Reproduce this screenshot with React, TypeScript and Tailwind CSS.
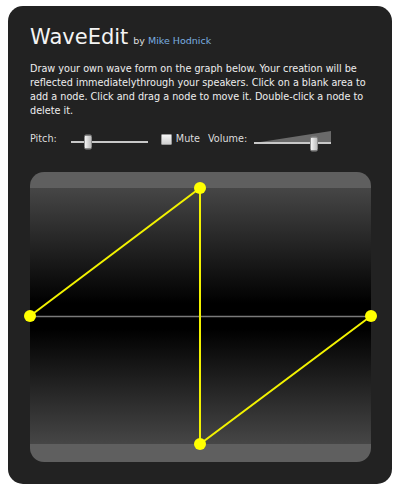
import React from "react";

const font = { fontFamily: '"DejaVu Sans", Verdana, sans-serif' };
const condensed = { fontFamily: '"DejaVu Sans Condensed", "DejaVu Sans", Tahoma, sans-serif' };

function Thumb() {
  return (
    <div className="absolute top-1/2 -translate-y-1/2 w-[8px] h-[15px] rounded-[2px] bg-gradient-to-r from-[#f4f4f4] to-[#bdbdbd] border border-[#8a8a8a]" />
  );
}

function WaveGraph() {
  const nodes = [
    [0, 144],
    [170, 16],
    [170, 272],
    [341, 144],
  ];
  return (
    <div className="relative w-[341px] h-[290px] rounded-[14px] overflow-visible">
      <div className="flex flex-col h-full rounded-[14px] overflow-hidden">
        <div className="h-[16px] bg-[#5f5f5f]" />
        <div className="flex-1 bg-[linear-gradient(to_bottom,#464646_0%,#000_45%,#000_55%,#464646_100%)]" />
        <div className="h-[18px] bg-[#5f5f5f]" />
      </div>
      <svg
        className="absolute inset-0 overflow-visible"
        width="341"
        height="290"
        viewBox="0 0 341 290"
      >
        <line x1="0" y1="144.5" x2="341" y2="144.5" stroke="#7a7a7a" strokeWidth="1.5" />
        <polyline
          points={nodes.map((n) => n.join(",")).join(" ")}
          fill="none"
          stroke="#f2f200"
          strokeWidth="2"
        />
        {nodes.map(([x, y]) => (
          <circle key={`${x}-${y}`} cx={x} cy={y} r="6" fill="#ffff00" />
        ))}
      </svg>
    </div>
  );
}

export default function App() {
  return (
    <div className="bg-white w-[400px] h-[490px] pt-[6px] px-[8px]" style={font}>
      <div className="bg-[#222] rounded-[15px] h-[478px] pl-[22px] pt-[17px] text-[#eee]">
        <div className="flex items-baseline gap-[5px]">
          <h1 className="text-[21px] leading-[28px] text-[#f4f4f4]">WaveEdit</h1>
          <span className="text-[9.5px] text-[#ddd]">
            by <span className="text-[#7aaee0]">Mike Hodnick</span>
          </span>
        </div>

        <p className="mt-[11px] text-[10.75px] leading-[14px] whitespace-nowrap text-[#eee]" style={condensed}>
          Draw your own wave form on the graph below. Your creation will be
          <br />
          reflected immediatelythrough your speakers. Click on a blank area to
          <br />
          add a node. Click and drag a node to move it. Double-click a node to
          <br />
          delete it.
        </p>

        <div className="mt-[11px] flex items-center h-[20px] text-[10.75px] text-[#ddd]" style={condensed}>
          <span>Pitch:</span>
          <div className="relative ml-[14px] mt-[6px] w-[77px] h-[16px]">
            <div className="absolute left-0 right-0 top-[7px] h-[2px] bg-[#c8c8c8]" />
            <div className="absolute left-[13px] top-0 h-full">
              <Thumb />
            </div>
          </div>
          <div className="ml-[13px] w-[11px] h-[11px] rounded-[1px] bg-gradient-to-b from-[#f6f6f6] to-[#cfcfcf] border border-[#999]" />
          <span className="ml-[4px]">Mute</span>
          <span className="ml-[8px]">Volume:</span>
          <div className="relative ml-[7px] w-[77px] h-[20px]">
            <svg className="absolute inset-0" width="77" height="20" viewBox="0 0 77 20">
              <polygon points="0,14 77,2 77,14" fill="#6a6a6a" />
              <rect x="0" y="13" width="77" height="2" fill="#c8c8c8" />
            </svg>
            <div className="absolute left-[56px] top-[7px] h-[16px]">
              <Thumb />
            </div>
          </div>
        </div>

        <div className="mt-[23px]">
          <WaveGraph />
        </div>
      </div>
    </div>
  );
}
